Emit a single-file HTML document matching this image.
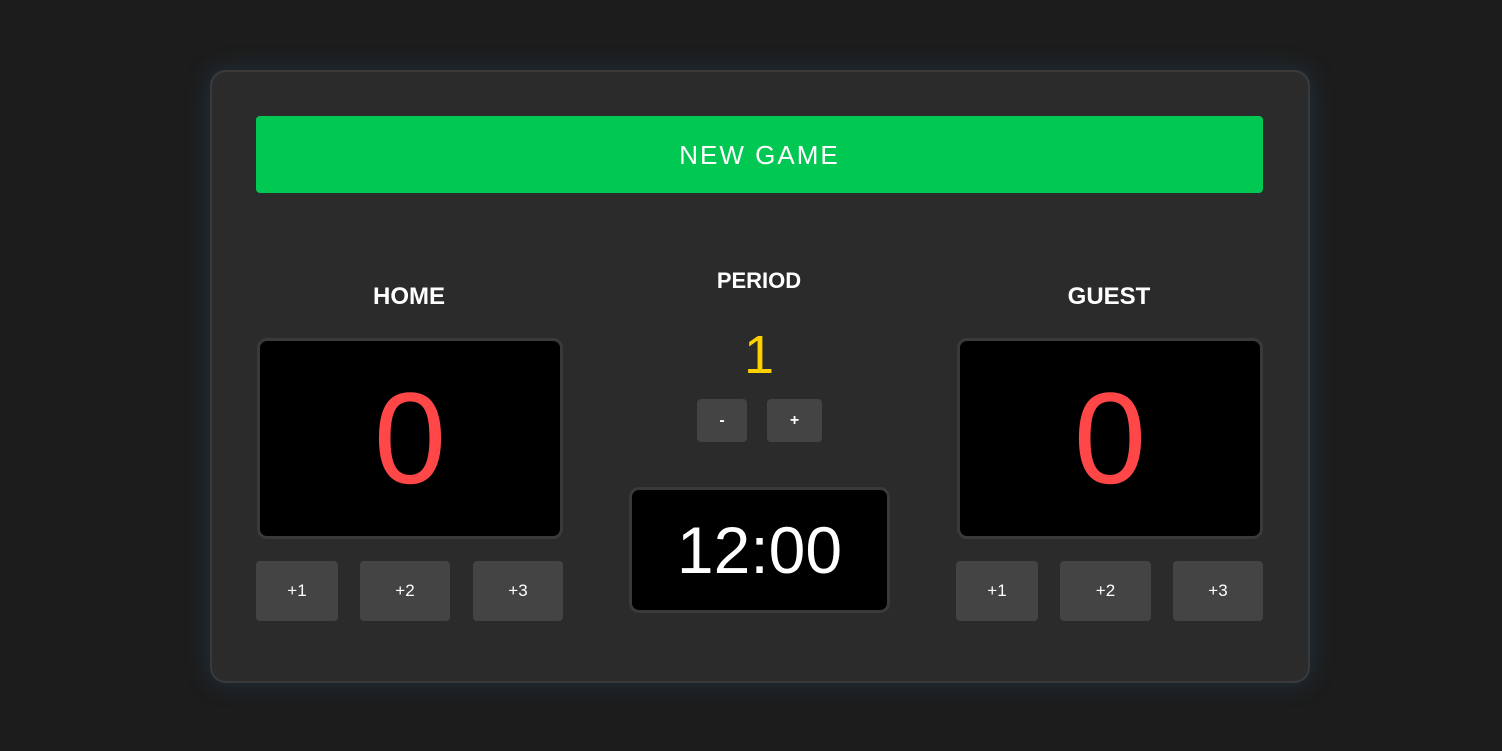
<!DOCTYPE html>
<html><head><style>
body{margin:0;width:1502px;height:751px;background:#1c1c1c;font-family:"Liberation Sans",sans-serif;position:relative;overflow:hidden}
.a{position:absolute}
.card{left:210px;top:70px;width:1096px;height:609px;background:#2b2b2b;border:2px solid #3a3a3a;border-radius:16px;box-shadow:0 0 24px rgba(40,80,110,0.45)}
.ng{left:256px;top:116px;width:1007px;height:77px;background:#00c853;border-radius:4px;color:#fff;font-size:26px;letter-spacing:2px;text-align:center;line-height:79px}
.lbl{color:#fff;font-weight:bold;font-size:24px;text-align:center;width:300px}
.box{background:#000;border:3px solid #3a3a3a;border-radius:10px;box-sizing:border-box;color:#ff4747;text-align:center}
.b{background:#444;border-radius:4px;color:#fff;font-size:17px;text-align:center;line-height:60px;height:60px;top:561px}
.s{background:#444;border-radius:4px;color:#fff;font-size:16px;font-weight:bold;text-align:center;top:399px;height:43px;line-height:43px}
</style></head><body>
<div class="a card"></div>
<div class="a ng">NEW GAME</div>
<div class="a lbl" style="left:259px;top:283px">HOME</div>
<div class="a lbl" style="left:609px;top:268px;font-size:22px">PERIOD</div>
<div class="a lbl" style="left:959px;top:283px">GUEST</div>
<div class="a box" style="left:257px;top:338px;width:306px;height:201px;font-size:130px;line-height:195px">0</div>
<div class="a box" style="left:957px;top:338px;width:306px;height:201px;font-size:130px;line-height:195px">0</div>
<div class="a" style="left:659px;top:325px;width:200px;text-align:center;color:#ffd000;font-size:54px;line-height:60px">1</div>
<div class="a s" style="left:697px;width:50px">-</div>
<div class="a s" style="left:767px;width:55px">+</div>
<div class="a box" style="left:629px;top:487px;width:261px;height:126px;color:#fff;font-size:66px;line-height:120px">12:00</div>
<div class="a b" style="left:256px;width:82px">+1</div>
<div class="a b" style="left:360px;width:90px">+2</div>
<div class="a b" style="left:473px;width:90px">+3</div>
<div class="a b" style="left:956px;width:82px">+1</div>
<div class="a b" style="left:1060px;width:91px">+2</div>
<div class="a b" style="left:1173px;width:90px">+3</div>
</body></html>
